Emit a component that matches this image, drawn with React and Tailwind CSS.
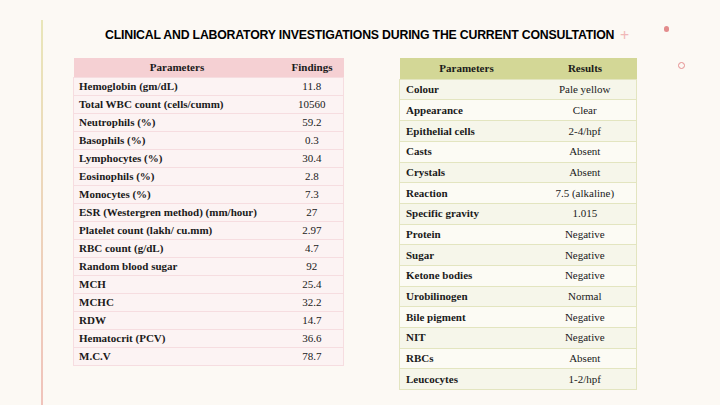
import React from 'react';

const blood = [
  ['Hemoglobin (gm/dL)', '11.8'],
  ['Total WBC count (cells/cumm)', '10560'],
  ['Neutrophils (%)', '59.2'],
  ['Basophils (%)', '0.3'],
  ['Lymphocytes (%)', '30.4'],
  ['Eosinophils (%)', '2.8'],
  ['Monocytes (%)', '7.3'],
  ['ESR (Westergren method) (mm/hour)', '27'],
  ['Platelet count (lakh/ cu.mm)', '2.97'],
  ['RBC count (g/dL)', '4.7'],
  ['Random blood sugar', '92'],
  ['MCH', '25.4'],
  ['MCHC', '32.2'],
  ['RDW', '14.7'],
  ['Hematocrit (PCV)', '36.6'],
  ['M.C.V', '78.7'],
];

const urine = [
  ['Colour', 'Pale yellow'],
  ['Appearance', 'Clear'],
  ['Epithelial cells', '2-4/hpf'],
  ['Casts', 'Absent'],
  ['Crystals', 'Absent'],
  ['Reaction', '7.5 (alkaline)'],
  ['Specific gravity', '1.015'],
  ['Protein', 'Negative'],
  ['Sugar', 'Negative'],
  ['Ketone bodies', 'Negative'],
  ['Urobilinogen', 'Normal'],
  ['Bile pigment', 'Negative'],
  ['NIT', 'Negative'],
  ['RBCs', 'Absent'],
  ['Leucocytes', '1-2/hpf'],
];

const serif = { fontFamily: '"Liberation Serif", serif' };

const App = () => {
  return (
    <div className="w-[720px] h-[405px] bg-[#fcf9f4] relative overflow-hidden flex">
      {/* left accent line */}
      <div className="ml-[41px] mt-[20px] w-[2px] h-[385px] bg-gradient-to-b from-[#e9e6b9] to-[#f0c3bb]" />

      {/* decorations */}
      <span className="absolute left-[620px] top-[27px] text-[16px] leading-none text-[#f1b8b8]">+</span>
      <span className="absolute left-[664px] top-[26px] w-[5px] h-[6px] rounded-full bg-[#e38c8c]" />
      <span className="absolute left-[678px] top-[62px] w-[7px] h-[7px] rounded-full border border-[#e58f8f]" />

      <div className="flex-1 flex flex-col">
        <h1
          className="mt-[29px] ml-[62px] text-[12.3px] font-bold text-black tracking-[-0.2px] leading-none"
          style={{ fontFamily: '"Liberation Sans", Arial, sans-serif' }}
        >
          CLINICAL AND LABORATORY INVESTIGATIONS DURING THE CURRENT CONSULTATION
        </h1>

        <div className="flex mt-[17px] ml-[30px] gap-[55px] items-start" style={serif}>
          <table className="w-[271px] border-collapse text-[11px] text-[#1a1a1a]">
            <thead>
              <tr className="h-[19px] bg-[#f5d0d3]">
                <th className="font-bold text-center w-[207px]">Parameters</th>
                <th className="font-bold text-center">Findings</th>
              </tr>
            </thead>
            <tbody>
              {blood.map(([p, v]) => (
                <tr key={p} className="h-[18px] bg-[#fcf3f3] border border-[#f6dde0]">
                  <td className="font-bold pl-[5px] leading-none">{p}</td>
                  <td className="text-center leading-none">{v}</td>
                </tr>
              ))}
            </tbody>
          </table>

          <table className="w-[238px] border-collapse text-[11px] text-[#1a1a1a]">
            <thead>
              <tr className="h-[21px] bg-[#d3d796]">
                <th className="font-bold text-center w-[134px]">Parameters</th>
                <th className="font-bold text-center">Results</th>
              </tr>
            </thead>
            <tbody>
              {urine.map(([p, v], i) => (
                <tr
                  key={p}
                  className={`h-[20.7px] border border-[#e3e5c0] ${i % 2 === 0 ? 'bg-[#f6f6ea]' : 'bg-[#fcfbf4]'}`}
                >
                  <td className="font-bold pl-[6px] leading-none">{p}</td>
                  <td className="text-center leading-none">{v}</td>
                </tr>
              ))}
            </tbody>
          </table>
        </div>
      </div>
    </div>
  );
};

export default App;
